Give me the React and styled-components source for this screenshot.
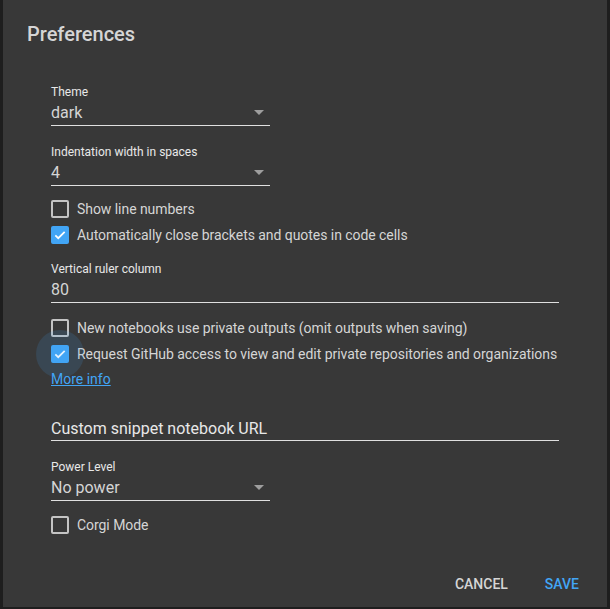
import React from 'react';
import styled, { createGlobalStyle } from 'styled-components';

const colors = {
    backdrop: '#1e1e1e',
    panel: '#383838',
    text: '#d5d5d5',
    label: '#e8e8e8',
    line: '#e0e0e0',
    blue: '#42a5f5',
    boxBorder: '#c4c4c4',
};

const Global = createGlobalStyle`
    html,body{margin:0;padding:0;background:${colors.backdrop};}
    body{font-family:Roboto,"Liberation Sans",sans-serif;}
`;

const Page = styled.div`
    width:610px;height:609px;display:flex;justify-content:center;align-items:flex-start;overflow:hidden;
`;

const Dialog = styled.div`
    width:604px;height:607px;background:${colors.panel};display:flex;flex-direction:column;box-sizing:border-box;
`;

const Title = styled.h2`
    margin:0;padding:22px 24px 0 24px;font-size:20px;line-height:24px;font-weight:500;color:${colors.text};
`;

const Body = styled.div`
    padding:0 48px;display:flex;flex-direction:column;flex:1;
`;

const Field = styled.div`
    display:flex;flex-direction:column;width:${p => p.$wide ? '508px' : '219px'};margin-top:${p => p.$top}px;
`;

const Label = styled.div`
    font-size:12px;line-height:16px;color:${colors.label};
`;

const ValueRow = styled.div`
    display:flex;align-items:center;justify-content:space-between;height:25px;border-bottom:1px solid ${colors.line};
    font-size:16px;color:${colors.text};
`;

const Arrow = styled.span`
    width:0;height:0;border-left:5px solid transparent;border-right:5px solid transparent;border-top:5px solid #9e9e9e;margin-right:6px;margin-top:-1px;
`;

const CheckRow = styled.label`
    display:flex;align-items:center;height:26px;margin-top:${p => p.$top || 0}px;font-size:14px;color:${colors.text};gap:8px;
    white-space:nowrap;letter-spacing:-0.05px;
`;

const Box = styled.span`
    position:relative;width:18px;height:18px;box-sizing:border-box;border-radius:2px;flex-shrink:0;
    border:2px solid ${p => p.$checked ? colors.blue : colors.boxBorder};
    background:${p => p.$checked ? colors.blue : 'transparent'};
    display:flex;align-items:center;justify-content:center;
    & svg{display:block;}
`;

const Ripple = styled.span`
    position:absolute;left:50%;top:50%;width:48px;height:48px;border-radius:50%;transform:translate(-50%,-50%);
    background:rgba(66,165,245,0.14);pointer-events:none;
`;

const MoreInfo = styled.a`
    font-size:14px;line-height:18px;color:${colors.blue};text-decoration:underline;margin-top:3px;align-self:flex-start;
`;

const UrlField = styled.div`
    width:508px;margin-top:30px;height:22px;border-bottom:1px solid ${colors.line};font-size:16px;line-height:22px;color:${colors.label};
`;

const Actions = styled.div`
    display:flex;justify-content:flex-end;gap:37px;padding:0 28px 15px 0;
`;

const Button = styled.button`
    background:none;border:none;padding:0;font-family:inherit;font-size:14px;font-weight:500;text-transform:uppercase;
    color:${p => p.$primary ? colors.blue : colors.text};cursor:pointer;
`;

const Check = ({ checked, ripple, children, top }) => (
    <CheckRow $top={top}>
        <Box $checked={checked}>
            {ripple && <Ripple />}
            {checked && (
                <svg width="14" height="14" viewBox="0 0 24 24">
                    <path d="M4 12.5l5 5L20 6.5" fill="none" stroke="#fff" strokeWidth="3" />
                </svg>
            )}
        </Box>
        <span>{children}</span>
    </CheckRow>
);

const Select = ({ label, value, top }) => (
    <Field $top={top}>
        <Label>{label}</Label>
        <ValueRow>{value}<Arrow /></ValueRow>
    </Field>
);

export default function App() {
    return (
        <Page>
            <Global />
            <Dialog>
                <Title>Preferences</Title>
                <Body>
                    <Select label="Theme" value="dark" top={38} />
                    <Select label="Indentation width in spaces" value="4" top={18} />
                    <Check top={10}>Show line numbers</Check>
                    <Check checked>Automatically close brackets and quotes in code cells</Check>
                    <Field $wide $top={13}>
                        <Label>Vertical ruler column</Label>
                        <ValueRow>80</ValueRow>
                    </Field>
                    <Check top={12}>New notebooks use private outputs (omit outputs when saving)</Check>
                    <Check checked ripple>Request GitHub access to view and edit private repositories and organizations</Check>
                    <MoreInfo href="#">More info</MoreInfo>
                    <UrlField>Custom snippet notebook URL</UrlField>
                    <Select label="Power Level" value="No power" top={18} />
                    <Check top={11}>Corgi Mode</Check>
                </Body>
                <Actions>
                    <Button>Cancel</Button>
                    <Button $primary>Save</Button>
                </Actions>
            </Dialog>
        </Page>
    );
}
